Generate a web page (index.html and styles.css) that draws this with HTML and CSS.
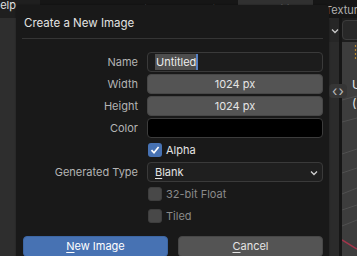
FILE: index.html
```html
<!DOCTYPE html>
<html>
<head>
<meta charset="utf-8">
<link rel="stylesheet" href="styles.css">
</head>
<body>
<div class="app">
  <header class="topbar">
    <div class="menu"><span class="menu-item">Help</span></div>
    <nav class="tabs">
      <span class="tab t-layout">Layout</span>
      <span class="tab t-model">Modeling</span>
      <span class="tab t-sculpt">Sculpting</span>
      <span class="tab t-uv active">UV Editing</span>
      <span class="tab t-tex">Texture Paint</span>
    </nav>
  </header>
  <main class="workarea">
    <aside class="leftpanel"></aside>
    <section class="center"></section>
    <aside class="sidebar">
      <div class="sidehead">
        <svg width="8" height="6" viewBox="0 0 8 6"><path d="M1 1.5 L4 4.5 L7 1.5" fill="none" stroke="#c8c8c8" stroke-width="1.3"/></svg>
      </div>
      <div class="sidebody"></div>
    </aside>
    <div class="divider"></div>
    <section class="viewport">
      <div class="vphead"><span class="vpbtn"></span></div>
      <div class="vpbody">
        <svg class="grid" width="15" height="214" viewBox="0 0 15 214">
          <path d="M0 112 L15 107 M0 131 L15 126 M0 152 L15 146 M0 168 L15 163 M0 184 L15 178 M0 58 L15 54 M0 80 L15 76" stroke="#505050" stroke-width="1" fill="none"/>
          <path d="M0 198 L15 207" stroke="#a3344a" stroke-width="1.5" fill="none"/>
          <path d="M13.5 3 L13.5 18" stroke="#b5852f" stroke-width="1.2" stroke-dasharray="2 2" fill="none"/>
        </svg>
        <div class="vptext">
          <span>User Perspective</span>
          <span>(5) Collection | Cube</span>
        </div>
      </div>
    </section>
  </main>
  <div class="swap"><span>&lsaquo;</span><span>&rsaquo;</span></div>

  <div class="dialog">
    <div class="title">Create a New Image</div>
    <div class="sep"></div>
    <div class="form">
      <label class="lbl">Name</label>
      <div class="field text"><span class="sel">Untitled</span><span class="caret"></span></div>

      <label class="lbl">Width</label>
      <div class="field num">1024 px</div>

      <label class="lbl">Height</label>
      <div class="field num">1024 px</div>

      <label class="lbl">Color</label>
      <div class="field color"></div>

      <span class="lbl"></span>
      <div class="check on">
        <span class="box"><svg width="10" height="10" viewBox="0 0 10 10"><path d="M1.5 5.2 L4 7.8 L8.6 2" fill="none" stroke="#ffffff" stroke-width="1.7"/></svg></span>
        <span>Alpha</span>
      </div>

      <label class="lbl">Generated Type</label>
      <div class="field drop"><span><u>B</u>lank</span>
        <svg width="8" height="6" viewBox="0 0 8 6"><path d="M1 1.5 L4 4.5 L7 1.5" fill="none" stroke="#d0d0d0" stroke-width="1.3"/></svg>
      </div>

      <span class="lbl"></span>
      <div class="check off"><span class="box"></span><span>32-bit Float</span></div>

      <span class="lbl"></span>
      <div class="check off"><span class="box"></span><span>Tiled</span></div>
    </div>
    <div class="buttons">
      <button class="btn primary"><u>N</u>ew Image</button>
      <button class="btn"><u>C</u>ancel</button>
    </div>
  </div>
</div>
</body>
</html>
```

FILE: styles.css
```css
* { box-sizing: border-box; }
html, body { margin: 0; padding: 0; }
body {
  width: 357px;
  height: 256px;
  overflow: hidden;
  background: #1d1d1d;
  font-family: Inter, "Noto Sans", sans-serif;
  font-size: 11px;
  color: #d8d8d8;
}
.app {
  position: relative;
  width: 357px;
  height: 256px;
  display: flex;
  flex-direction: column;
}

/* top bar */
.topbar {
  height: 18px;
  display: flex;
  background: #161616;
  flex: none;
}
.menu {
  flex: none;
  width: 40px;
  background: #1f1f1f;
  overflow: hidden;
  white-space: nowrap;
}
.menu-item {
  display: block;
  margin-left: -8px;
  line-height: 10px;
  color: #e0e0e0;
}
.tabs { display: flex; flex: 1 1 auto; min-width: 0; }
.tab {
  flex: none;
  line-height: 18px;
  padding-top: 1px;
  text-align: center;
  color: #b0b0b0;
  white-space: nowrap;
  overflow: hidden;
}
.t-layout { width: 62px; }
.t-model { width: 68px; }
.t-sculpt { width: 68px; }
.t-uv { width: 75px; }
.tab.t-tex { flex: 1 1 auto; min-width: 0; text-align: left; padding-left: 12px; }
.tab.active { background: #303030; color: #e6e6e6; }

/* work area */
.workarea {
  flex: 1;
  display: flex;
  min-height: 0;
}
.leftpanel { width: 16px; flex: none; background: #2e2e2e; }
.center { width: 313px; flex: none; background: #1d1d1d; }
.sidebar {
  width: 10px;
  flex: none;
  display: flex;
  flex-direction: column;
  background: #2b2b2b;
}
.sidehead {
  height: 24px;
  background: #262626;
  border-top-left-radius: 4px;
  display: flex;
  align-items: flex-end;
  justify-content: center;
  padding-bottom: 8px;
  padding-left: 2px;
}
.sidebody { flex: 1; }
.divider { width: 3px; flex: none; background: #161616; }
.viewport {
  flex: 1;
  display: flex;
  flex-direction: column;
  background: #3d3d3d;
  overflow: hidden;
}
.vphead {
  height: 24px;
  background: #1d1d1d;
  padding: 2px 0;
}
.vpbtn {
  display: block;
  height: 20px;
  margin-right: -6px;
  border: 1px solid #3c3c3c;
  border-radius: 4px;
  background: #282828;
}
.vpbody { flex: 1; position: relative; }
.grid { display: block; position: absolute; left: 0; top: 0; }
.vptext {
  position: absolute;
  left: 10px;
  top: 36px;
  display: flex;
  flex-direction: column;
  gap: 5px;
  white-space: nowrap;
  color: #e8e8e8;
  font-size: 12px;
  line-height: 14px;
}

.swap {
  position: absolute;
  left: 329px;
  top: 84px;
  width: 18px;
  height: 14px;
  border-radius: 4px;
  background: #363636;
  display: flex;
  justify-content: center;
  align-items: center;
  gap: 1px;
  color: #b8b8b8;
  font-size: 14px;
  line-height: 14px;
}

/* dialog */
.dialog {
  position: absolute;
  left: 16px;
  top: 5px;
  width: 313px;
  height: 262px;
  background: #191919;
  border-radius: 4px 4px 0 0;
  padding: 0 6px;
  box-shadow: 0 0 2px rgba(0,0,0,0.4);
}
.title {
  height: 33px;
  padding: 10px 0 0 2px;
  line-height: 16px;
  font-size: 11.5px;
  color: #e2e2e2;
}
.sep { height: 1px; background: #353535; }
.form {
  margin-top: 13px;
  display: grid;
  grid-template-columns: 116px 176px;
  column-gap: 9px;
  row-gap: 2px;
  grid-auto-rows: 20px;
}
.lbl {
  text-align: right;
  line-height: 20px;
  color: #b4b4b4;
  white-space: nowrap;
}
.field {
  border-radius: 4px;
  border: 1px solid #3a3a3a;
  line-height: 18px;
  color: #e4e4e4;
}
.field.text {
  background: #1c1c1c;
  padding: 1px 0 1px 7px;
  display: flex;
}
.sel {
  background: #4e4e4e;
  padding: 0 0 0 1px;
  line-height: 16px;
  color: #ededed;
}
.caret { width: 2px; background: #5680c2; }
.field.num { background: #545454; border-color: #474747; text-align: center; }
.field.color { background: #000; border-color: #3c3c3c; }
.field.drop {
  background: #1f1f1f;
  display: flex;
  justify-content: space-between;
  align-items: center;
  padding: 0 4px 0 7px;
}
.field.drop svg { margin-top: 1px; }
.check {
  display: flex;
  align-items: center;
  gap: 4px;
  padding-left: 1px;
  color: #e4e4e4;
}
.box {
  width: 14px;
  height: 14px;
  border-radius: 3px;
  background: #4a4a4a;
  display: flex;
  align-items: center;
  justify-content: center;
}
.check.on .box { background: #4772b3; }
.check.off { color: #8a8a8a; }
.check.off .box { background: #484848; border: 1px solid #3e3e3e; }

.buttons {
  margin-top: 10px;
  padding-left: 1px;
  display: grid;
  grid-template-columns: 145px 145px;
  column-gap: 10px;
}
.btn {
  height: 21px;
  border: 1px solid #474747;
  border-radius: 4px;
  background: #545454;
  color: #e4e4e4;
  font-family: inherit;
  font-size: 11px;
  padding: 0;
  line-height: 19px;
}
.btn.primary { background: #4772b3; border-color: #3d66a3; color: #ffffff; }
u { text-underline-offset: 2px; }
```
